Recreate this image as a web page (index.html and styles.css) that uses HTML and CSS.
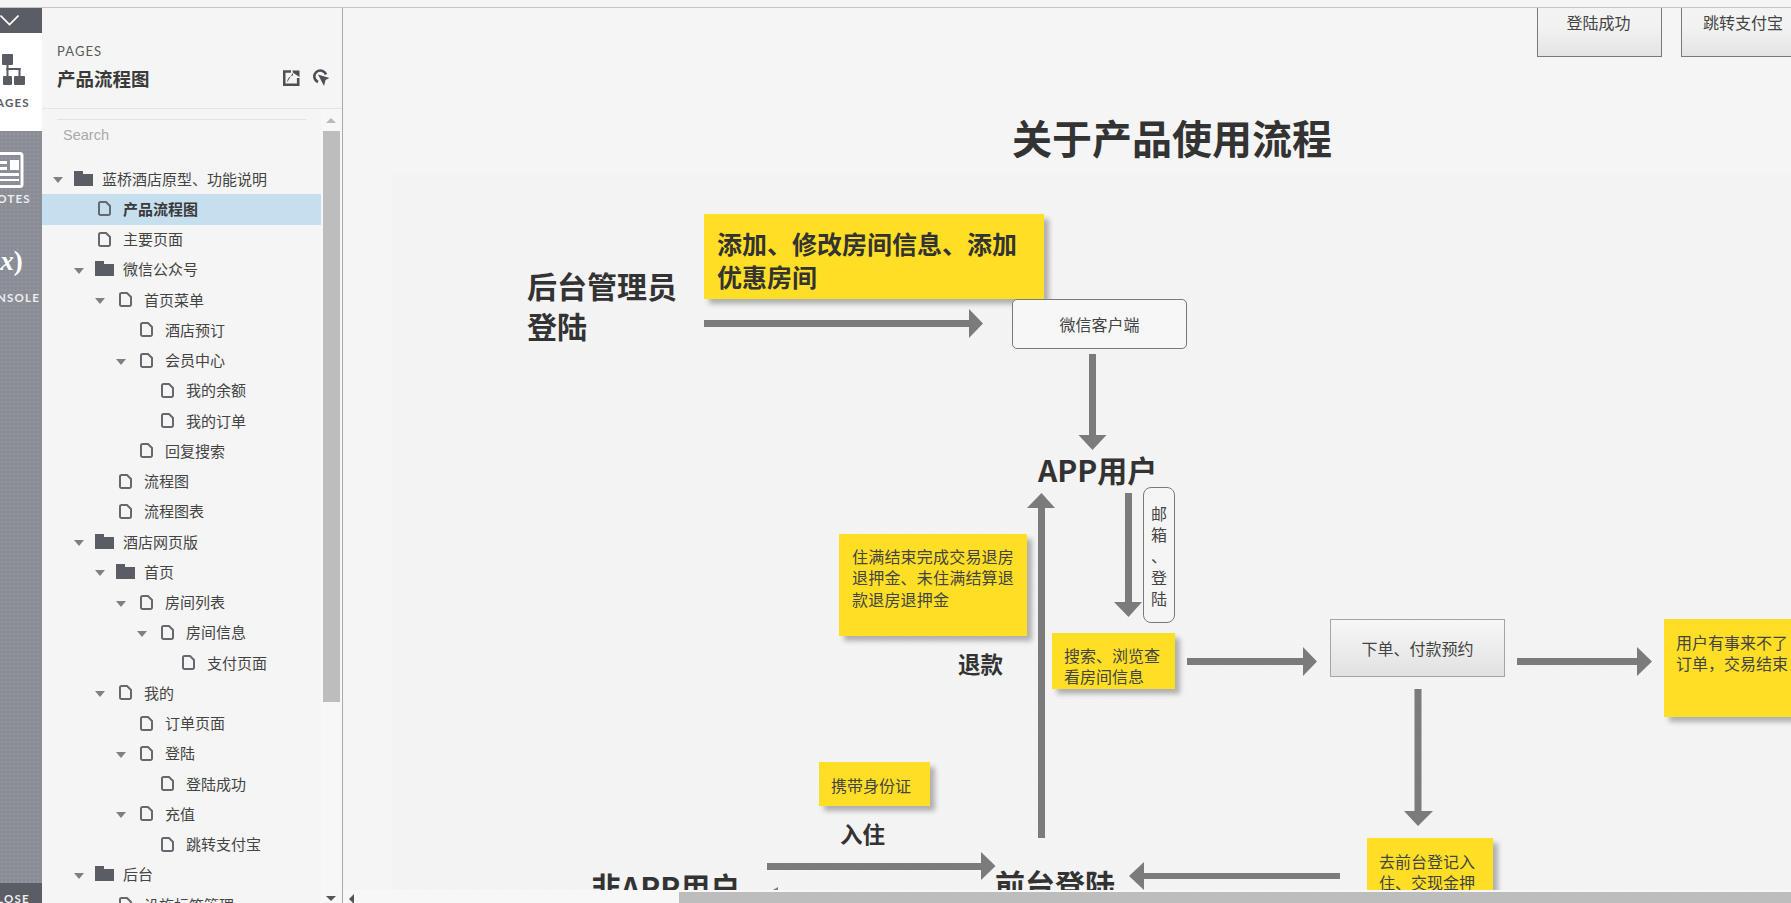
FILE: index.html
```html
<!DOCTYPE html>
<html lang="zh-CN">
<head>
<meta charset="utf-8">
<title>产品流程图</title>
<link rel="stylesheet" href="styles.css">
</head>
<body>
<svg class="defs" width="0" height="0"><symbol id="pg"><path d="M2.500 1H8L12 5V12.500A1.500 1.500 0 0 1 10.500 14H2.500A1.500 1.500 0 0 1 1 12.500V2.500A1.500 1.500 0 0 1 2.500 1Z" fill="none" stroke="#66686e" stroke-width="2"/></symbol></svg>
<div class="topline"></div>
<div class="app">
  <nav class="rail">
    <div class="rail-toggle">
      <svg class="chev" width="19" height="11" viewBox="0 0 19 11"><path d="M.5.500l9 9 9-9" fill="none" stroke="#fff" stroke-width="1.600"/></svg>
    </div>
    <div class="rail-tab rail-active">
      <svg class="rail-icon map-icon" width="26" height="32" viewBox="0 0 26 32"><g fill="#5a5c63"><rect x="2" y="0" width="11" height="11" rx="1"/><rect x="6.500" y="11" width="2" height="5"/><rect x="6.500" y="14" width="14" height="2"/><rect x="6.500" y="14" width="2" height="8"/><rect x="18.500" y="14" width="2" height="8"/><rect x="3" y="22" width="9" height="9" rx="1"/><rect x="14" y="22" width="11" height="9" rx="1"/></g></svg>
      <span class="rail-label dark">PAGES</span>
    </div>
    <div class="rail-tab notes-tab">
      <svg class="rail-icon" width="48" height="36" viewBox="0 0 48 36"><rect x="12" y="1.500" width="33" height="33" rx="2" fill="none" stroke="#fff" stroke-width="3"/><g fill="#fff"><rect x="14" y="9" width="16" height="3"/><rect x="14" y="15" width="16" height="3"/><rect x="14" y="21" width="28" height="3"/><rect x="14" y="27" width="28" height="2"/><rect x="33" y="8" width="9" height="10"/></g></svg>
      <span class="rail-label">NOTES</span>
    </div>
    <div class="rail-tab console-tab">
      <span class="fx">(<i>x</i>)</span>
      <span class="rail-label">CONSOLE</span>
    </div>
    <div class="rail-close"><span class="rail-label">CLOSE</span></div>
  </nav>

  <aside class="sidebar">
    <header class="side-head">
      <div class="side-kicker">PAGES</div>
      <div class="side-title-row">
        <h2 class="side-title">产品流程图</h2>
        <svg class="act-export" width="17" height="16" viewBox="0 0 17 16"><path d="M8 1.500H1.200v13.300h14V8" fill="none" stroke="#4d4f55" stroke-width="2.600"/><path d="M4 12.500c.3-4 2.500-6.300 6-7V2.800L16.500 7V.5H9.500l.5 2.300z" fill="#4d4f55"/></svg>
        <svg class="act-cursor" width="18" height="18" viewBox="0 0 18 18"><path d="M14 5.500A6 6 0 1 0 6 13" fill="none" stroke="#4d4f55" stroke-width="2.600"/><path d="M6 5.500l11.500 3.500-4 2L12 17z" fill="#4d4f55"/></svg>
      </div>
    </header>
    <div class="side-body">
      <div class="tree-pane">
        <div class="search">Search</div>
        <ul class="tree">
          <li class="row l0"><i class="tri"></i><i class="folder"></i><span>蓝桥酒店原型、功能说明</span></li>
          <li class="row l1 sel"><i class="notri"></i><svg class="page"><use href="#pg"/></svg><span>产品流程图</span></li>
          <li class="row l1"><i class="notri"></i><svg class="page"><use href="#pg"/></svg><span>主要页面</span></li>
          <li class="row l1"><i class="tri"></i><i class="folder"></i><span>微信公众号</span></li>
          <li class="row l2"><i class="tri"></i><svg class="page"><use href="#pg"/></svg><span>首页菜单</span></li>
          <li class="row l3"><i class="notri"></i><svg class="page"><use href="#pg"/></svg><span>酒店预订</span></li>
          <li class="row l3"><i class="tri"></i><svg class="page"><use href="#pg"/></svg><span>会员中心</span></li>
          <li class="row l4"><i class="notri"></i><svg class="page"><use href="#pg"/></svg><span>我的余额</span></li>
          <li class="row l4"><i class="notri"></i><svg class="page"><use href="#pg"/></svg><span>我的订单</span></li>
          <li class="row l3"><i class="notri"></i><svg class="page"><use href="#pg"/></svg><span>回复搜索</span></li>
          <li class="row l2"><i class="notri"></i><svg class="page"><use href="#pg"/></svg><span>流程图</span></li>
          <li class="row l2"><i class="notri"></i><svg class="page"><use href="#pg"/></svg><span>流程图表</span></li>
          <li class="row l1"><i class="tri"></i><i class="folder"></i><span>酒店网页版</span></li>
          <li class="row l2"><i class="tri"></i><i class="folder"></i><span>首页</span></li>
          <li class="row l3"><i class="tri"></i><svg class="page"><use href="#pg"/></svg><span>房间列表</span></li>
          <li class="row l4"><i class="tri"></i><svg class="page"><use href="#pg"/></svg><span>房间信息</span></li>
          <li class="row l5"><i class="notri"></i><svg class="page"><use href="#pg"/></svg><span>支付页面</span></li>
          <li class="row l2"><i class="tri"></i><svg class="page"><use href="#pg"/></svg><span>我的</span></li>
          <li class="row l3"><i class="notri"></i><svg class="page"><use href="#pg"/></svg><span>订单页面</span></li>
          <li class="row l3"><i class="tri"></i><svg class="page"><use href="#pg"/></svg><span>登陆</span></li>
          <li class="row l4"><i class="notri"></i><svg class="page"><use href="#pg"/></svg><span>登陆成功</span></li>
          <li class="row l3"><i class="tri"></i><svg class="page"><use href="#pg"/></svg><span>充值</span></li>
          <li class="row l4"><i class="notri"></i><svg class="page"><use href="#pg"/></svg><span>跳转支付宝</span></li>
          <li class="row l1"><i class="tri"></i><i class="folder"></i><span>后台</span></li>
          <li class="row l2"><i class="notri"></i><svg class="page"><use href="#pg"/></svg><span>设施标签管理</span></li>
        </ul>
      </div>
      <div class="vscroll">
        <i class="arrow-up"></i>
        <div class="vthumb"></div>
        <i class="arrow-down"></i>
      </div>
    </div>
  </aside>

  <main class="stage">
    <div class="canvas">
      <div class="panel"></div>
      <div class="btn btn-login">登陆成功</div>
      <div class="btn btn-alipay">跳转支付宝</div>
      <h1 class="title">关于产品使用流程</h1>

      <svg class="arrows" width="1448" height="882" viewBox="0 0 1448 882">
        <g fill="#7b7b7b">
          <path d="M361 312H626V301L640 315.500 626 330V319H361z"/>
          <path d="M746 346H753V427H763.500L749.500 442 735.500 427H746z"/>
          <path d="M695 830H702V500H712L698.500 485 684 500H695z"/>
          <path d="M782 485H789V594H799L785.500 609 771 594H782z"/>
          <path d="M844 650H960V639L974 653.500 960 668V657H844z"/>
          <path d="M1174 650H1294V639L1309 653.500 1294 668V657H1174z"/>
          <path d="M1071.500 681H1078.500V803H1090L1075 818 1061 803H1071.500z"/>
          <path d="M997 865H801V854L786 868 801 882V871H997z"/>
          <path d="M424 855H638V844L652.500 858 638 872V862H424z"/>
          <path d="M435 879l-5 3h5z"/>
        </g>
      </svg>

      <div class="sticky s-add">添加、修改房间信息、添加<br>优惠房间</div>
      <div class="heading h-admin">后台管理员<br>登陆</div>
      <div class="box b-wechat">微信客户端</div>
      <div class="heading h-app">APP用户</div>
      <div class="box b-mail">邮<br>箱<br>、<br>登<br>陆</div>
      <div class="sticky s-refund">住满结束完成交易退房<br>退押金、未住满结算退<br>款退房退押金</div>
      <div class="sub h-refund">退款</div>
      <div class="sticky s-search">搜索、浏览查<br>看房间信息</div>
      <div class="box b-order">下单、付款预约</div>
      <div class="sticky s-cancel">用户有事来不了<br>订单，交易结束</div>
      <div class="sticky s-id">携带身份证</div>
      <div class="sub h-checkin">入住</div>
      <div class="sticky s-desk">去前台登记入<br>住、交现金押</div>
      <div class="heading h-nonapp">非APP用户</div>
      <div class="heading h-front">前台登陆</div>
    </div>
    <div class="hscroll">
      <i class="arrow-left"></i>
      <div class="hthumb"></div>
    </div>
  </main>
</div>
</body>
</html>
```

FILE: styles.css
```css
* { box-sizing: border-box; }
html, body { margin: 0; height: 100%; overflow: hidden; }
body {
  background: #f5f5f5;
  color: #333;
  font-family: "Noto Sans CJK SC", "Liberation Sans", sans-serif;
  font-size: 14px;
}
ul { list-style: none; margin: 0; padding: 0; }
h1, h2 { margin: 0; }
.defs { position: absolute; }

.topline { height: 8px; border-bottom: 1px solid #c4c4c4; }
.app { display: flex; height: 895px; }

/* Left rail */
.rail {
  width: 42px;
  flex: none;
  display: flex;
  flex-direction: column;
  overflow: hidden;
  background-color: #8a8d95;
  background-image: radial-gradient(#92959c 1px, transparent 1px);
  background-size: 4px 4px;
}
.rail-toggle { height: 25px; background: #5b5d64; flex: none; position: relative; overflow: hidden; }
.chev { position: absolute; left: 0; top: 7px; }
.rail-tab {
  width: 66px;
  margin-left: -24px;
  display: flex;
  flex-direction: column;
  align-items: center;
  flex: none;
}
.rail-active { height: 98px; background: #fff; padding-top: 21px; }
.rail-label {
  font-family: "Lato", "Liberation Sans", sans-serif;
  font-weight: 700;
  font-size: 11.500px;
  letter-spacing: 1.200px;
  line-height: 14px;
  color: #eceef0;
  white-space: nowrap;
}
.rail-label.dark { color: #5a5c63; margin-top: 10px; }
.rail-icon { flex: none; }
.map-icon { margin-left: 8px; }
.notes-tab { height: 98px; padding-top: 21px; }
.notes-tab .rail-icon { margin-left: -16px; }
.notes-tab .rail-label { margin-top: 4px; }
.console-tab { height: 100px; padding-top: 16px; }
.fx {
  font-family: "Liberation Serif", serif;
  font-weight: 700;
  font-size: 27px;
  line-height: 32px;
  color: #fff;
  white-space: nowrap;
  margin-left: -4px;
}
.console-tab .rail-label { margin-top: 14px; }
.rail-close {
  margin-top: auto;
  height: 20px;
  width: 66px;
  margin-left: -24px;
  flex: none;
  background: #5b5d64;
  text-align: center;
  padding-top: 4px;
  box-shadow: 24px 0 0 #5b5d64;
}

/* Page sidebar */
.sidebar {
  width: 301px;
  flex: none;
  display: flex;
  flex-direction: column;
  border-right: 1px solid #a9a9a9;
  background: #f5f5f5;
  overflow: hidden;
}
.side-head {
  height: 101px;
  flex: none;
  border-bottom: 1px solid #e4e4e4;
  padding: 35px 12px 0 15px;
}
.side-kicker {
  font-family: "Lato", "Liberation Sans", sans-serif;
  font-size: 13px;
  letter-spacing: 1.100px;
  line-height: 16px;
  color: #5a5a5a;
}
.side-title-row { display: flex; align-items: center; margin-top: 7px; height: 24px; }
.side-title { font-size: 18.500px; font-weight: 700; line-height: 24px; flex: 1; color: #3a3a3a; }
.act-cursor { margin-left: 12px; }
.side-body { flex: 1; display: flex; min-height: 0; }
.tree-pane { width: 279px; flex: none; overflow: hidden; }
.search {
  margin: 10px 15px 0;
  width: 249px;
  height: 34px;
  border-top: 1px solid #e2e2e2;
  padding: 5px 4px 0 6px;
  font-family: "Liberation Sans", sans-serif;
  font-size: 14.500px;
  line-height: 20px;
  color: #a9a9a9;
}
.tree { padding-top: 11px; }
.row {
  height: 30.250px;
  display: flex;
  align-items: center;
  font-size: 15px;
  color: #444;
  white-space: nowrap;
}
.row span { margin-top: -2px; }
.sel {
  background-color: #c6dfef;
  font-weight: 700;
  color: #3a3a3a;
}
.l0 { padding-left: 11px; }
.l1 { padding-left: 32px; }
.l2 { padding-left: 53px; }
.l3 { padding-left: 74px; }
.l4 { padding-left: 95px; }
.l5 { padding-left: 116px; }
.tri, .notri { width: 21px; flex: none; height: 10px; }
.tri { position: relative; }
.tri::before {
  content: "";
  position: absolute;
  left: 0;
  top: 3px;
  border-left: 5.500px solid transparent;
  border-right: 5.500px solid transparent;
  border-top: 6px solid #808080;
}
.folder {
  width: 28px;
  height: 15px;
  flex: none;
  background: linear-gradient(#5b5d64, #5b5d64) 0 3px / 19px 12px no-repeat,
              linear-gradient(#5b5d64, #5b5d64) 0 0 / 9px 4px no-repeat;
  margin-top: -2px;
}
.page {
  width: 25px;
  height: 15px;
  flex: none;
  margin-left: 3px;
  margin-top: -1px;
}

.vscroll {
  width: 21px;
  flex: none;
  position: relative;
  background: #f7f7f7;
}
.vthumb { position: absolute; left: 2px; top: 22px; width: 17px; height: 571px; background: #bdbdbd; }
.arrow-up, .arrow-down { position: absolute; left: 5px; width: 0; height: 0; border-left: 5px solid transparent; border-right: 5px solid transparent; }
.arrow-up { top: 9px; border-bottom: 5px solid #b9b9b9; }
.arrow-down { top: 787px; border-top: 5px solid #555; }

/* Canvas */
.stage { flex: 1; min-width: 0; display: flex; flex-direction: column; }
.canvas { flex: 1; position: relative; overflow: hidden; background: #f5f5f5; }
.hscroll { height: 13px; flex: none; position: relative; background: #f7f7f7; }
.hthumb { position: absolute; left: 336px; right: 0; top: 2px; bottom: 0; background: #bdbdbd; }
.arrow-left { position: absolute; left: 6px; top: 4px; width: 0; height: 0; border-top: 5px solid transparent; border-bottom: 5px solid transparent; border-right: 5px solid #555; }

.panel {
  position: absolute;
  left: 49px;
  top: 166px;
  right: 0;
  bottom: 0;
  background-color: #f3f3f3;
  background-image: radial-gradient(#f6f6f6 1px, transparent 1px);
  background-size: 3px 3px;
}
.arrows { position: absolute; left: 0; top: 0; }

.title {
  position: absolute;
  left: 669px;
  top: 104px;
  font-size: 40px;
  line-height: 50px;
  font-weight: 700;
  white-space: nowrap;
  color: #333;
}
.btn {
  position: absolute;
  top: -10px;
  height: 59px;
  padding-top: 13px;
  text-align: center;
  font-size: 16px;
  line-height: 20px;
  color: #444;
  border: 1px solid #797979;
  background: linear-gradient(#f4f4f4, #f2f2f2 50%, #e4e4e4);
}
.btn-login { left: 1194px; width: 125px; padding-right: 2px; }
.btn-alipay { left: 1338px; width: 200px; text-align: left; padding-left: 21px; }

.sticky {
  position: absolute;
  background: #ffdf25;
  box-shadow: 5px 5px 5px rgba(0, 0, 0, .28);
  font-size: 16px;
  line-height: 21.300px;
  color: #444;
  white-space: nowrap;
  overflow: hidden;
}
.s-add {
  left: 361px; top: 206px; width: 340px; height: 85px;
  padding: 13px 0 0 13px;
  font-size: 25px; font-weight: 700; line-height: 33px; color: #333;
}
.s-refund { left: 496px; top: 526px; width: 188px; height: 102px; padding: 12px 0 0 13px; letter-spacing: .2px; }
.s-search { left: 709px; top: 625px; width: 123px; height: 56px; padding: 12px 0 0 12px; }
.s-cancel { left: 1321px; top: 611px; width: 140px; height: 98px; padding: 13px 0 0 12px; }
.s-id { left: 476px; top: 754px; width: 111px; height: 44px; padding: 13px 0 0 12px; }
.s-desk { left: 1024px; top: 830px; width: 126px; height: 52px; padding: 13px 0 0 12px; }

.heading {
  position: absolute;
  font-size: 30px;
  font-weight: 700;
  line-height: 40px;
  white-space: nowrap;
  color: #333;
}
.h-admin { left: 184px; top: 257px; }
.h-app { left: 695px; top: 441px; }
.h-nonapp { left: 248px; top: 858px; }
.h-front { left: 652px; top: 855px; }
.sub {
  position: absolute;
  font-size: 22.500px;
  font-weight: 700;
  line-height: 30px;
  white-space: nowrap;
}
.h-refund { left: 615px; top: 640px; }
.h-checkin { left: 497px; top: 810px; }

.box {
  position: absolute;
  border: 1px solid #797979;
  color: #444;
  font-size: 16px;
  line-height: 20px;
  text-align: center;
}
.b-wechat { left: 669px; top: 291px; width: 175px; height: 50px; border-radius: 5px; padding-top: 14px; background: #f7f7f7; }
.b-mail { left: 800px; top: 479px; width: 32px; height: 136px; border-radius: 8px; padding-top: 15px; line-height: 21.200px; background: #f5f5f5; }
.b-order {
  left: 987px; top: 611px; width: 175px; height: 58px; padding-top: 18px;
  border-color: #a5a5a5;
  background: linear-gradient(#f6f6f6, #f1f1f1 30%, #e1e1e1);
}
```
